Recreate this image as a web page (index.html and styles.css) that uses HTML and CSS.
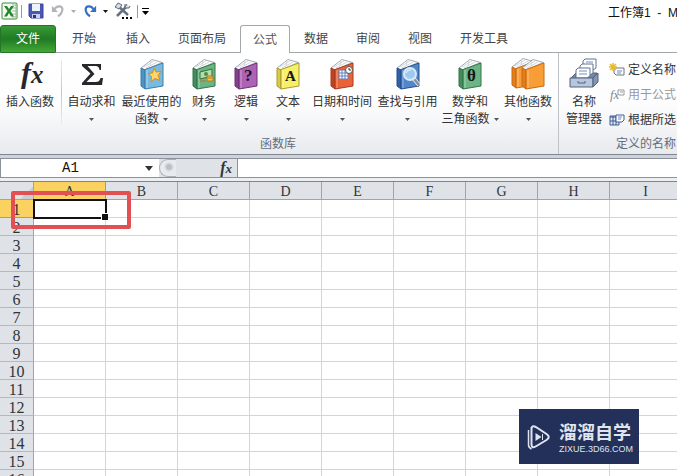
FILE: index.html
```html
<!DOCTYPE html>
<html lang="zh-CN">
<head>
<meta charset="utf-8">
<title>工作簿1</title>
<link rel="stylesheet" href="styles.css">
</head>
<body>
<svg class="defs" aria-hidden="true">
  <symbol id="book" viewBox="0 0 24 32">
    <path d="M1 10 12 1.5 22.5 4.5 5 12Z" fill="#fff" stroke="#8a949c" stroke-width=".8"/>
    <path d="M4 9 14 3M6 10 17 4M8 11 20 5M10 8l1-5" stroke="#c5cdd3" stroke-width=".8" fill="none"/>
    <path d="M1 10 5 12V31L1 28Z" fill="var(--dark)" stroke="var(--edge)"/>
    <path d="M5 11.5 23 5V28L5 31Z" fill="var(--face)" stroke="var(--edge)"/>
    <path d="M7 12V30" stroke="#fff" stroke-opacity=".4"/>
  </symbol>
</svg>
<header class="titlebar">
  <div class="quick">
    <svg class="logo" viewBox="0 0 17 18"><rect x="1" y="1" width="15" height="16" rx="1" fill="#f4faf2" stroke="#3b8a3e"/><path d="M11 3h4v12h-4" fill="#fff" stroke="#8dbd8b"/><path d="M11 6h4M11 9h4M11 12h4" stroke="#8dbd8b"/><path d="M3 4h3l2 3 2-3h3L9.500 9l3.500 5.500h-3L8 11l-2 3.500H3L6.500 9Z" fill="#24852b"/></svg>
    <span class="bar"></span>
    <button class="save" aria-label="保存"><svg viewBox="0 0 16 16"><path d="M1 1h14v14H3l-2-2Z" fill="#4c56b4" stroke="#3d469c"/><path d="M4 1h8v7H4Z" fill="#eef2fd"/><path d="M4 11h8v4H4Z" fill="#c9cfec"/><path d="M5 12h3v3H5Z" fill="#2d357f"/></svg></button>
    <button class="undo" aria-label="撤消"><svg viewBox="0 0 16 16"><path d="M1 2v7h7Z" fill="#b4b4b8"/><path d="M4 6c3-5 9-4 9 0 0 4-2 6-5 8" fill="none" stroke="#b4b4b8" stroke-width="2.500"/></svg></button>
    <svg class="arrow faint" viewBox="0 0 5 3"><path d="M0 0h5L2.500 3Z"/></svg>
    <button class="redo" aria-label="恢复"><svg viewBox="0 0 16 16"><path d="M15 2v7H8Z" fill="#356fc7"/><path d="M12 6C9 1 3 2 3 6c0 4 2 6 5 8" fill="none" stroke="#356fc7" stroke-width="2.500"/></svg></button>
    <svg class="arrow" viewBox="0 0 5 3"><path d="M0 0h5L2.500 3Z"/></svg>
    <button class="tools" aria-label="工具"><svg viewBox="0 0 18 18"><path d="M3 14 12 5M3 3l11 10" stroke="#65717e" stroke-width="2.500"/><path d="M1 5 4 1 8 3 5 7ZM11 2v4h4l1-2M11 5l2-3" fill="#d9dfe6" stroke="#5d6873"/><path d="M8 15h2v2H8ZM12 15h2v2h-2ZM16 15h2v2h-2Z"/></svg></button>
    <span class="bar"></span>
    <button class="more" aria-label="自定义"><svg viewBox="0 0 7 7"><path d="M0 0h7v1H0ZM0 3h7L3.500 7Z"/></svg></button>
  </div>
  <div class="title">工作簿1&nbsp; -&nbsp; Microsoft Excel</div>
</header>
<nav class="tabs">
  <button class="file">文件</button>
  <button>开始</button>
  <button>插入</button>
  <button class="wide">页面布局</button>
  <button class="active">公式</button>
  <button>数据</button>
  <button>审阅</button>
  <button>视图</button>
  <button class="wide">开发工具</button>
  <span class="rest"></span>
</nav>
<section class="ribbon">
  <div class="group">
    <div class="commands">
      <button class="cmd split"><svg viewBox="0 0 34 34"><text x="8" y="26" class="fxbig">f</text><text x="18" y="26" class="fxbig sub">x</text></svg><span>插入函数</span></button>
      <button class="cmd"><svg viewBox="0 0 34 34"><path d="M7 7h19v6h-1.500c-.5-3-1.500-4-4-4h-8l7 8-8 8h9c3 0 4-1 5-4H28l-1 7H7v-2l8.500-9.500L7 9Z" fill="#26282c"/></svg><span>自动求和</span><svg class="arrow" viewBox="0 0 5 3"><path d="M0 0h5L2.500 3Z"/></svg></button>
      <button class="cmd"><svg class="sky" viewBox="0 0 34 34"><use href="#book" x="5" y="1" width="24" height="32"/><path d="m19 11 2 4 5-.5-3 4 2 5-5-2-4 3 .5-5-3.500-3 4.500-.5Z" fill="#ffd667" stroke="#d68b22"/></svg><span>最近使用的</span><span>函数 <svg class="arrow" viewBox="0 0 5 3"><path d="M0 0h5L2.500 3Z"/></svg></span></button>
      <button class="cmd"><svg class="green" viewBox="0 0 34 34"><use href="#book" x="5" y="1" width="24" height="32"/><path d="m13 15 12-3v7l-12 3Z" fill="#b9dca5" stroke="#2f7045"/><circle cx="19" cy="17" r="2" fill="#4a8f50"/><path d="M20 19h6v5h-6Z" fill="#f3c64e" stroke="#b37b20"/><path d="M20 21h6M13 24h6" stroke="#b37b20"/></svg><span>财务</span><svg class="arrow" viewBox="0 0 5 3"><path d="M0 0h5L2.500 3Z"/></svg></button>
      <button class="cmd"><svg class="purple" viewBox="0 0 34 34"><use href="#book" x="5" y="1" width="24" height="32"/><text x="15" y="24" class="mark">?</text></svg><span>逻辑</span><svg class="arrow" viewBox="0 0 5 3"><path d="M0 0h5L2.500 3Z"/></svg></button>
      <button class="cmd"><svg class="yellow" viewBox="0 0 34 34"><use href="#book" x="5" y="1" width="24" height="32"/><text x="14" y="24" class="mark small">A</text></svg><span>文本</span><svg class="arrow" viewBox="0 0 5 3"><path d="M0 0h5L2.500 3Z"/></svg></button>
      <button class="cmd"><svg class="red" viewBox="0 0 34 34"><use href="#book" x="5" y="1" width="24" height="32"/><path d="M14 13h9v9h-9Z" fill="#fff" stroke="#6382bb"/><path d="M14 16h9M14 19h9M17 13v9M20 13v9" stroke="#6382bb"/><circle cx="24" cy="13" r="3.500" fill="#fff" stroke="#555"/><path d="M24 11v2h2" fill="none" stroke="#333"/></svg><span>日期和时间</span><svg class="arrow" viewBox="0 0 5 3"><path d="M0 0h5L2.500 3Z"/></svg></button>
      <button class="cmd"><svg class="blue" viewBox="0 0 34 34"><use href="#book" x="5" y="1" width="24" height="32"/><path d="m23 22 5 6" stroke="#eef1f3" stroke-width="4"/><path d="m23 22 5 6" stroke="#8b8f93" stroke-width="2.500"/><circle cx="19" cy="17" r="6" fill="#9bcbf2" stroke="#dce9f4" stroke-width="2"/><path d="M15 16c1-3 4-3 5-3" stroke="#fff" fill="none"/></svg><span>查找与引用</span><svg class="arrow" viewBox="0 0 5 3"><path d="M0 0h5L2.500 3Z"/></svg></button>
      <button class="cmd"><svg class="green" viewBox="0 0 34 34"><use href="#book" x="5" y="1" width="24" height="32"/><text x="14" y="24" class="mark">θ</text></svg><span>数学和</span><span>三角函数 <svg class="arrow" viewBox="0 0 5 3"><path d="M0 0h5L2.500 3Z"/></svg></span></button>
      <button class="cmd"><svg class="orange" viewBox="0 0 34 34"><use href="#book" x="0" y="0" width="24" height="32"/><use href="#book" x="10" y="1" width="24" height="32"/></svg><span>其他函数</span><svg class="arrow" viewBox="0 0 5 3"><path d="M0 0h5L2.500 3Z"/></svg></button>
    </div>
    <div class="caption">函数库</div>
  </div>
  <div class="group names">
    <div class="namecmds">
      <button class="cmd"><svg viewBox="0 0 34 34"><path d="m3 22 6-6h21l-4 6Z" fill="#7587a5" stroke="#52627e"/><g fill="#fff" stroke="#60728e"><path d="m16 4 2-2h11v9l-3 2h-10Z"/><path d="m13 9 2-2h11v9l-3 2H13Z"/><path d="m9 13 2-2h12v8l-3 2H9Z"/></g><path d="M12 14h8M12 17h8M19 5h7" stroke="#6c8fc5"/><path d="M3 21h23v9H3Z" fill="#b8c7dc" stroke="#52627e"/><path d="m26 21 5-5v9l-5 5Z" fill="#8397b5" stroke="#52627e"/><path d="M11 24v2h7v-2" fill="none" stroke="#52627e"/></svg><span>名称</span><span>管理器</span></button>
      <div class="list">
        <button><svg viewBox="0 0 16 16"><path d="M5 6h10v7H7l-2-2Z" fill="#fff" stroke="#66768e"/><path d="M8 9h5M8 11h4" stroke="#6888b8"/><path d="M4 1v8M0 5h8M1 2l6 6M7 2 1 8" stroke="#e8b92d" stroke-width="1.500"/></svg>定义名称</button>
        <button class="off"><svg viewBox="0 0 16 16"><text x="1" y="12" class="fxsmall">fx</text><path d="M9 3h6v5h-5l-1-1Z" fill="#fff" stroke="#999"/><path d="M11 5h3" stroke="#999"/></svg>用于公式</button>
        <button><svg viewBox="0 0 16 16"><path d="M1 4h9v9H1Z" fill="#dce7f7" stroke="#415d91"/><path d="M1 5h9M1 9h9M4 4v9M7 4v9" stroke="#415d91"/><path d="M7 3h8v5l-2 2H7Z" fill="#fff" stroke="#415d91"/><path d="M9 5h4M9 7h3" stroke="#6888b8"/></svg>根据所选</button>
      </div>
    </div>
    <div class="caption">定义的名称</div>
  </div>
</section>
<div class="formulabar">
  <div class="namebox"><input aria-label="名称框" value="A1"><button aria-label="展开名称"><svg viewBox="0 0 8 5"><path d="M0 0h8L4 5Z"/></svg></button></div>
  <div class="fxarea"><span class="knob"></span><button aria-label="插入函数"><i>f</i><i class="x">x</i></button></div>
  <input class="formula" aria-label="编辑栏">
</div>
<main class="sheet">
  <table>
    <colgroup><col class="rowcol"><col span="9"></colgroup>
    <thead><tr><th class="corner"></th><th class="sel">A</th><th>B</th><th>C</th><th>D</th><th>E</th><th>F</th><th>G</th><th>H</th><th>I</th></tr></thead>
    <tbody>
      <tr><th class="sel">1</th><td class="current"><span class="cursor"></span><span class="callout"></span></td><td></td><td></td><td></td><td></td><td></td><td></td><td></td><td></td></tr>
      <tr><th>2</th><td></td><td></td><td></td><td></td><td></td><td></td><td></td><td></td><td></td></tr>
      <tr><th>3</th><td></td><td></td><td></td><td></td><td></td><td></td><td></td><td></td><td></td></tr>
      <tr><th>4</th><td></td><td></td><td></td><td></td><td></td><td></td><td></td><td></td><td></td></tr>
      <tr><th>5</th><td></td><td></td><td></td><td></td><td></td><td></td><td></td><td></td><td></td></tr>
      <tr><th>6</th><td></td><td></td><td></td><td></td><td></td><td></td><td></td><td></td><td></td></tr>
      <tr><th>7</th><td></td><td></td><td></td><td></td><td></td><td></td><td></td><td></td><td></td></tr>
      <tr><th>8</th><td></td><td></td><td></td><td></td><td></td><td></td><td></td><td></td><td></td></tr>
      <tr><th>9</th><td></td><td></td><td></td><td></td><td></td><td></td><td></td><td></td><td></td></tr>
      <tr><th>10</th><td></td><td></td><td></td><td></td><td></td><td></td><td></td><td></td><td></td></tr>
      <tr><th>11</th><td></td><td></td><td></td><td></td><td></td><td></td><td></td><td></td><td></td></tr>
      <tr><th>12</th><td></td><td></td><td></td><td></td><td></td><td></td><td></td><td></td><td></td></tr>
      <tr><th>13</th><td></td><td></td><td></td><td></td><td></td><td></td><td></td><td></td><td></td></tr>
      <tr><th>14</th><td></td><td></td><td></td><td></td><td></td><td></td><td></td><td></td><td></td></tr>
      <tr><th>15</th><td></td><td></td><td></td><td></td><td></td><td></td><td></td><td></td><td></td></tr>
      <tr><th>16</th><td></td><td></td><td></td><td></td><td></td><td></td><td></td><td></td><td></td></tr>
    </tbody>
  </table>
</main>
<aside class="watermark">
  <svg viewBox="0 0 24 26"><path d="M5 3v17c0 4 2 4 5 2l10-6c3-2 3-4 0-6L11 4C7 1 5 2 5 5" fill="none" stroke="#dfe4ef" stroke-width="2"/><path d="M2 6v15c0 2 1 3 3 4" fill="none" stroke="#dfe4ef" stroke-width="1.500"/><path d="M9 9v8l6-4Z" fill="#dfe4ef"/><path d="M16 10v6" stroke="#dfe4ef"/></svg>
  <div><strong>溜溜自学</strong><small>ZIXUE.3D66.COM</small></div>
</aside>
</body>
</html>
```
FILE: styles.css
```css
* { box-sizing: border-box; }
body {
  margin: 0;
  height: 100vh;
  overflow: hidden;
  position: relative;
  display: flex;
  flex-direction: column;
  background: #fff;
  color: #333;
  font: 12px/16px "Liberation Sans", "Noto Sans CJK SC", sans-serif;
}
button, input { font: inherit; color: inherit; border: 0; padding: 0; margin: 0; background: none; }
svg { display: block; flex: none; }
.defs { position: absolute; width: 0; height: 0; }
.arrow { width: 5px; height: 3px; fill: #555; }

.titlebar { display: flex; height: 25px; flex: none; }
.quick { flex: 1; display: flex; align-items: center; height: 22px; padding-left: 1px; }
.quick .arrow { fill: #111; margin: 0 6px 0 5px; }
.quick .arrow.faint { fill: #aaa; }
.logo { width: 17px; height: 18px; }
.bar { width: 1px; height: 13px; background: #999; margin: 0 6px 0 3px; }
.quick button svg { width: 16px; height: 16px; }
.undo { margin-left: 6px; }
.undo svg, .redo svg { padding: 1px; }
.quick .tools svg { width: 18px; height: 18px; }
.tools + .bar { margin: 0 4px 0 5px; }
.quick .more svg { width: 7px; height: 7px; }
.title { width: 69px; overflow: hidden; white-space: nowrap; color: #111; line-height: 26px; }

.tabs { display: flex; height: 28px; flex: none; }
.tabs button { width: 52px; border-bottom: 1px solid #a3a8ad; color: #444; }
.tabs .file { width: 56px; border-radius: 3px 3px 0 0; background: linear-gradient(#3a9a37, #1f7a24 50%, #43a834); border: 1px solid #24752a; color: #fff; }
.tabs .file + button { width: 56px; }
.tabs button.wide { width: 76px; }
.tabs button.active { width: 50px; border: 1px solid #a3a8ad; border-bottom: 0; border-radius: 3px 3px 0 0; background: #fff; color: #555; }
.rest { flex: 1; border-bottom: 1px solid #a3a8ad; }

.ribbon {
  display: flex;
  height: 102px;
  flex: none;
  border-bottom: 1px solid #82868d;
  background: linear-gradient(#fff 0, #fdfdfe 50%, #e7eaee);
}
.group { display: flex; flex-direction: column; flex: none; border-right: 1px solid #bfc3c9; padding-right: 2px; }
.group.names { flex: 1; min-width: 0; overflow: hidden; border: 0; padding: 0; }
.commands { display: grid; grid-template-columns: 63px 57px 63px repeat(3, 42px) 66px 65px 60px 56px; height: 81px; }
.cmd { display: flex; flex-direction: column; align-items: center; justify-content: flex-start; padding-top: 4px; white-space: nowrap; line-height: 17px; }
.cmd > svg:first-child { width: 34px; height: 34px; margin-bottom: 3px; }
.cmd > .arrow { margin-top: 7px; }
.cmd span { display: flex; align-items: center; gap: 4px; }
.split { position: relative; padding-right: 3px; }
.split::after { content: ""; position: absolute; right: 1px; top: 6px; width: 1px; height: 66px; background: linear-gradient(#eee, #c0c3c8, #eee); }
.caption { text-align: center; color: #666b78; line-height: 20px; white-space: nowrap; }
.names .caption { align-self: flex-start; padding-left: 57px; }
.namecmds { display: flex; height: 81px; }
.names .cmd { width: 50px; flex: none; }
.list { display: flex; flex-direction: column; padding-top: 4px; }
.list button { display: flex; align-items: center; gap: 3px; height: 25px; white-space: nowrap; }
.list svg { width: 16px; height: 16px; }
.off { color: #999; }

.fxbig { font: italic bold 30px "Liberation Serif", serif; fill: #25272b; }
.fxbig.sub { font-size: 25px; }
.fxsmall { font: italic 13px "Liberation Serif", serif; fill: #888; }
.mark { font: bold 17px "Liberation Serif", serif; fill: #161616; }
.mark.small { font-size: 15px; }
.sky { --face: #79bbe0; --dark: #4a94c3; --edge: #3b7ea8; }
.green { --face: #6bb584; --dark: #438c5e; --edge: #32744a; }
.purple { --face: #ad62b5; --dark: #84408d; --edge: #6c3375; }
.yellow { --face: #f8ef69; --dark: #dccb3c; --edge: #a99b31; }
.red { --face: #ea6338; --dark: #c3421e; --edge: #a93b1d; }
.blue { --face: #4f86cc; --dark: #2e60a8; --edge: #274f8c; }
.orange { --face: #f99d35; --dark: #e57d18; --edge: #c66a14; }

.formulabar { display: flex; height: 27px; flex: none; border-top: 3px solid #cfd2dc; border-bottom: 1px solid #7f858e; background: #edf0f3; padding-bottom: 3px; }
.namebox { display: flex; width: 159px; border: 1px solid #8c929b; border-right: 0; background: #fff; }
.namebox input { width: 139px; text-align: center; font: 14px/18px "Liberation Mono", monospace; color: #111; }
.namebox button { width: 18px; display: flex; align-items: center; justify-content: center; }
.namebox svg { width: 8px; height: 5px; fill: #333; }
.fxarea { display: flex; width: 78px; justify-content: space-between; background: #dfe3e7; border-top: 1px solid #8c929b; border-bottom: 1px solid #8c929b; padding-right: 5px; }
.knob { width: 17px; height: 18px; border: 1px solid #aab0b7; border-right: 0; border-radius: 9px 0 0 9px; background: radial-gradient(circle at 9px 7px, #b9bfc6 0 2px, #e8ebee 5px); }
.fxarea button { font: italic bold 16px/18px "Liberation Serif", serif; color: #333; }
.fxarea .x { font-size: 13px; }
.formula { flex: 1; min-width: 0; border: 1px solid #8c929b; border-right: 0; background: #fff; padding: 0 4px; }

.sheet { flex: 1; min-height: 0; overflow: hidden; }
table { table-layout: fixed; border-collapse: separate; border-spacing: 0; width: 682px; }
col { width: 72px; }
.rowcol { width: 34px; }
th, td { height: 18px; padding: 0; border-right: 1px solid #d3d5d8; border-bottom: 1px solid #d3d5d8; }
th { background: #dfe3e8; border-color: #9fa5ac; padding-top: 2px; font: 16px/15px "Liberation Serif", serif; color: #30343a; }
thead th { font-size: 14px; }
tbody th { border-bottom-color: #b4b9bf; }
.corner { background: linear-gradient(135deg, #dfe3e8 75%, #c9ced4 75%); }
th.sel { background: #fbd262; border-color: #c99a3c; }
.current { position: relative; }
.cursor { position: absolute; inset: -1px -2px -2px -1px; border: 2px solid #111; }
.cursor::after { content: ""; position: absolute; right: -3px; bottom: -3px; width: 6px; height: 6px; background: #111; border: 1px solid #fff; border-right: 0; border-bottom: 0; }
.callout { position: absolute; left: -23px; top: -9px; width: 120px; height: 38px; border: 4px solid #e35053; border-radius: 2px; z-index: 1; }

.watermark { position: absolute; right: 38px; bottom: 12px; width: 120px; height: 55px; display: flex; align-items: center; gap: 8px; padding-left: 7px; background: #22305a; color: #dfe4ef; }
.watermark svg { width: 25px; height: 26px; }
.watermark strong { display: block; font: bold 18px/24px "Noto Sans CJK SC", sans-serif; }
.watermark small { display: block; font-size: 9px; line-height: 12px; }
```
